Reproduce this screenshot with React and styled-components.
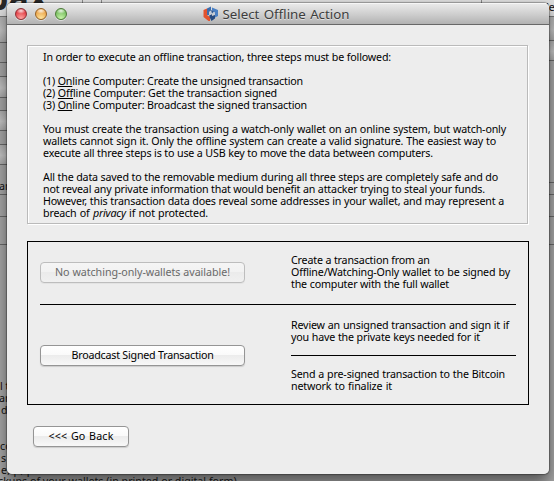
import React from "react";
import styled, { createGlobalStyle } from "styled-components";

const GlobalStyle = createGlobalStyle`
  * { box-sizing: border-box; }
  body { margin: 0; overflow: hidden; }
`;

const Desktop = styled.div`
  position: relative;
  width: 554px;
  height: 481px;
  overflow: hidden;
  padding: 3px 5px 7px 7px;
  background: #a8a8a8;
  font: 10.7px/12px "Noto Sans", sans-serif;
  color: #000;
`;

const Backdrop = styled.div`
  position: absolute;
  inset: 0;
  overflow: hidden;
`;

const TopStrip = styled.div`
  display: flex;
  height: 17px;
  background: #dcdcdc;
  border-bottom: 1px solid #777;
`;

const TopCell = styled.div`
  width: ${(p) => p.$w}px;
  border-right: 1px solid #888;
`;

const Columns = styled.div`
  display: flex;
  justify-content: space-between;
`;

const Strip = styled.div`
  width: 8px;
`;

const Band = styled.div`
  height: ${(p) => p.$h}px;
  border-bottom: 1px solid #696969;
  background: ${(p) => (p.$light ? "linear-gradient(#b0b0b0, #c6c6c6 55%, #acacac)" : "#a8a8a8")};
`;

const LargeWord = styled.span`
  position: absolute;
  left: ${(p) => p.$x}px;
  top: ${(p) => p.$y}px;
  font: bold 34px/34px "Noto Sans", sans-serif;
  color: #282828;
`;

const Scrap = styled.span`
  position: absolute;
  left: ${(p) => p.$x}px;
  top: ${(p) => p.$y}px;
  white-space: nowrap;
  color: ${(p) => p.$color || "#111"};
  letter-spacing: ${(p) => p.$ls || 0}px;
`;

const Window = styled.main`
  position: relative;
  display: flex;
  flex-direction: column;
  height: 471px;
  background: #ededed;
  border-radius: 5px;
  overflow: hidden;
`;

const Shadow = styled.div`
  position: relative;
  border-radius: 5px;
  box-shadow: 0 0 1px 1px rgba(0, 0, 0, 0.3), 0 9px 16px rgba(0, 0, 0, 0.5);
`;

const TitleBar = styled.header`
  position: relative;
  display: flex;
  align-items: center;
  justify-content: center;
  height: 22px;
  flex: none;
  background: linear-gradient(#e9e9e9, #cfcfcf 50%, #b2b2b2);
  border-top: 1px solid #f6f6f6;
  border-bottom: 1px solid #686868;
`;

const Lights = styled.div`
  position: absolute;
  left: 8px;
  top: 4px;
  display: flex;
  gap: 8px;
`;

const Light = styled.i`
  width: 12px;
  height: 12px;
  border-radius: 50%;
  border: 1px solid ${(p) => p.$edge};
  background: radial-gradient(ellipse 5px 3px at 50% 18%, rgba(255, 255, 255, 0.85), transparent),
    radial-gradient(circle at 50% 95%, ${(p) => p.$glow}, ${(p) => p.$mid} 75%);
  box-shadow: 0 1px 0 rgba(255, 255, 255, 0.5);
`;

const Title = styled.h1`
  display: flex;
  align-items: center;
  gap: 4px;
  margin: 0 0 0 -4px;
  font: 13.3px/20px "Noto Sans", sans-serif;
  color: #3d3d3d;
  text-shadow: 0 1px 0 rgba(255, 255, 255, 0.5);
`;

const TitleText = styled.span`
  width: 127px;
  text-align-last: justify;
  white-space: nowrap;
`;

const Body = styled.div`
  display: flex;
  flex-direction: column;
  align-items: flex-start;
  padding: 20px;
`;

const Notice = styled.section`
  width: 501px;
  height: 179px;
  padding: 5px 15px;
  border: 1px solid #bababa;
  box-shadow: inset 1px 1px 0 #fff, 1px 1px 0 #fff;
`;

const Line = styled.div`
  width: ${(p) => p.$w}px;
  height: 12px;
  letter-spacing: ${(p) => p.$ls ?? -0.17}px;
  text-align: justify;
  text-align-last: justify;
  white-space: nowrap;
`;

const Gap = styled.div`
  height: 12px;
`;

const Underlined = styled.u`
  text-underline-offset: 1px;
  text-decoration-skip-ink: none;
`;

const Actions = styled.section`
  width: 502px;
  height: 164px;
  margin-top: 17px;
  padding: 0 12px;
  border: 1px solid #000;
`;

const ActionRow = styled.div`
  display: grid;
  grid-template-columns: 205px 225px;
  justify-content: space-between;
  height: ${(p) => p.$h}px;
`;

const ButtonCell = styled.div`
  padding-top: ${(p) => p.$top}px;
`;

const Description = styled.div`
  height: ${(p) => p.$h}px;
  padding-top: ${(p) => p.$top}px;
`;

const Rule = styled.hr`
  height: 1px;
  margin: 0;
  border: 0;
  background: #000;
`;

const Button = styled.button`
  display: flex;
  justify-content: center;
  width: ${(p) => p.$w}px;
  height: 21px;
  padding: 3px 0 0;
  border: 1px solid #959595;
  border-radius: 4px;
  background: linear-gradient(#fff, #fafafa 45%, #ececec 50%, #f8f8f8);
  box-shadow: 0 1px 1px rgba(0, 0, 0, 0.14);
  color: #000;
  font: inherit;

  &:disabled {
    border-color: #bdbdbd;
    background: linear-gradient(#f5f5f5, #f2f2f2 45%, #ebebeb 50%, #f0f0f0);
    box-shadow: 0 1px 0 rgba(0, 0, 0, 0.04);
    color: #696969;
  }
`;

const Footer = styled.footer`
  padding: 21px 0 0 6px;
`;

function ArmoryIcon() {
  return (
    <svg width="16" height="16" viewBox="0 0 16 16" aria-hidden="true">
      <path d="M0.5 4 4 2.5v6.5l3 2v4L5.5 15 0.5 11z" fill="#e2532f" />
      <path d="M4 2.5 8 0.5v4L6 6v3L4 9z" fill="#3d6cab" />
      <path d="m9 1.5 6 2.5v6l-3 1.5V7L9 5.5z" fill="#4a80c4" />
      <path d="M6 9.5 9 8v2l3-1v3.5L8.5 15 7 12z" fill="#274b80" />
      <path d="m6 6 3-1.5L12 6.5V9L9 8 6 9.5z" fill="#c3cbd6" />
      <path d="m8 4 3 1.5-2 2z" fill="#2b5692" />
    </svg>
  );
}

const leftBands = [26, 20, 14, 21, 13, 20, 14, 20, 30, 22, 28];
const rightBands = [24, 20, 122, 12, 22, 28];

export default function App() {
  return (
    <Desktop>
      <GlobalStyle />
      <Backdrop>
        <TopStrip>
          <TopCell $w={83} />
          <TopCell $w={19} />
          <TopCell $w={380} />
        </TopStrip>
        <Columns>
          <Strip>{leftBands.map((h, i) => <Band key={i} $h={h} $light={i === 0 || i === 3 || i === 5 || i === 7} />)}</Strip>
          <Strip>{rightBands.map((h, i) => <Band key={i} $h={h} $light={i < 2} />)}</Strip>
        </Columns>
        <LargeWord $x={-13} $y={-20}>pax</LargeWord>
        <Scrap $x={546} $y={1}>le</Scrap>
        <Scrap $x={-1} $y={180}>an</Scrap>
        <Scrap $x={0} $y={380} $color="#210606">l t</Scrap>
        <Scrap $x={-1} $y={392}>ar</Scrap>
        <Scrap $x={1} $y={404}>d</Scrap>
        <Scrap $x={0} $y={440}>co</Scrap>
        <Scrap $x={1} $y={452}>s</Scrap>
        <Scrap $x={1} $y={464} $ls={0.3}>e, p, pe</Scrap>
      </Backdrop>
      <Shadow>
        <Window>
          <TitleBar>
            <Lights>
              <Light $edge="#8d3035" $mid="#df343c" $glow="#ffaaa5" />
              <Light $edge="#946026" $mid="#eaa044" $glow="#ffe7a0" />
              <Light $edge="#4c7b38" $mid="#72b95a" $glow="#caf7ac" />
            </Lights>
            <Title>
              <ArmoryIcon />
              <TitleText>Select Offline Action</TitleText>
            </Title>
          </TitleBar>
          <Body>
            <Notice>
              <Line $w={348}>In order to execute an offline transaction, three steps must be followed:</Line>
              <Gap />
              <Line $w={260}>(1) <Underlined>On</Underlined>line Computer: Create the unsigned transaction</Line>
              <Line $w={234}>(2) <Underlined>Off</Underlined>line Computer: Get the transaction signed</Line>
              <Line $w={264}>(3) <Underlined>On</Underlined>line Computer: Broadcast the signed transaction</Line>
              <Gap />
              <Line $w={463}>You must create the transaction using a watch-only wallet on an online system, but watch-only</Line>
              <Line $w={453}>wallets cannot sign it. Only the offline system can create a valid signature. The easiest way to</Line>
              <Line $w={390}>execute all three steps is to use a USB key to move the data between computers.</Line>
              <Gap />
              <Line $w={455}>All the data saved to the removable medium during all three steps are completely safe and do</Line>
              <Line $w={442}>not reveal any private information that would benefit an attacker trying to steal your funds.</Line>
              <Line $w={461}>However, this transaction data does reveal some addresses in your wallet, and may represent a</Line>
              <Line $w={165}>breach of <em>privacy</em> if not protected.</Line>
            </Notice>
            <Actions>
              <ActionRow $h={62}>
                <ButtonCell $top={20}>
                  <Button $w={205} disabled><Line as="span" $w={175} $ls={-0.05}>No watching-only-wallets available!</Line></Button>
                </ButtonCell>
                <Description $h={62} $top={12}>
                  <Line $w={138}>Create a transaction from an</Line>
                  <Line $w={219}>Offline/Watching-Only wallet to be signed by</Line>
                  <Line $w={158}>the computer with the full wallet</Line>
                </Description>
              </ActionRow>
              <Rule />
              <ActionRow $h={99}>
                <ButtonCell $top={40}>
                  <Button $w={205}><Line as="span" $w={142} $ls={-0.22}>Broadcast Signed Transaction</Line></Button>
                </ButtonCell>
                <div>
                  <Description $h={50} $top={14}>
                    <Line $w={218}>Review an unsigned transaction and sign it if</Line>
                    <Line $w={189}>you have the private keys needed for it</Line>
                  </Description>
                  <Rule />
                  <Description $h={47} $top={12}>
                    <Line $w={214}>Send a pre-signed transaction to the Bitcoin</Line>
                    <Line $w={101}>network to finalize it</Line>
                  </Description>
                </div>
              </ActionRow>
            </Actions>
            <Footer>
              <Button $w={96}><Line as="span" $w={65} $ls={0.15}>&lt;&lt;&lt; Go Back</Line></Button>
            </Footer>
          </Body>
        </Window>
      </Shadow>
      <Scrap $x={-2} $y={475}>ckups of your wallets (in printed or digital form)</Scrap>
    </Desktop>
  );
}
